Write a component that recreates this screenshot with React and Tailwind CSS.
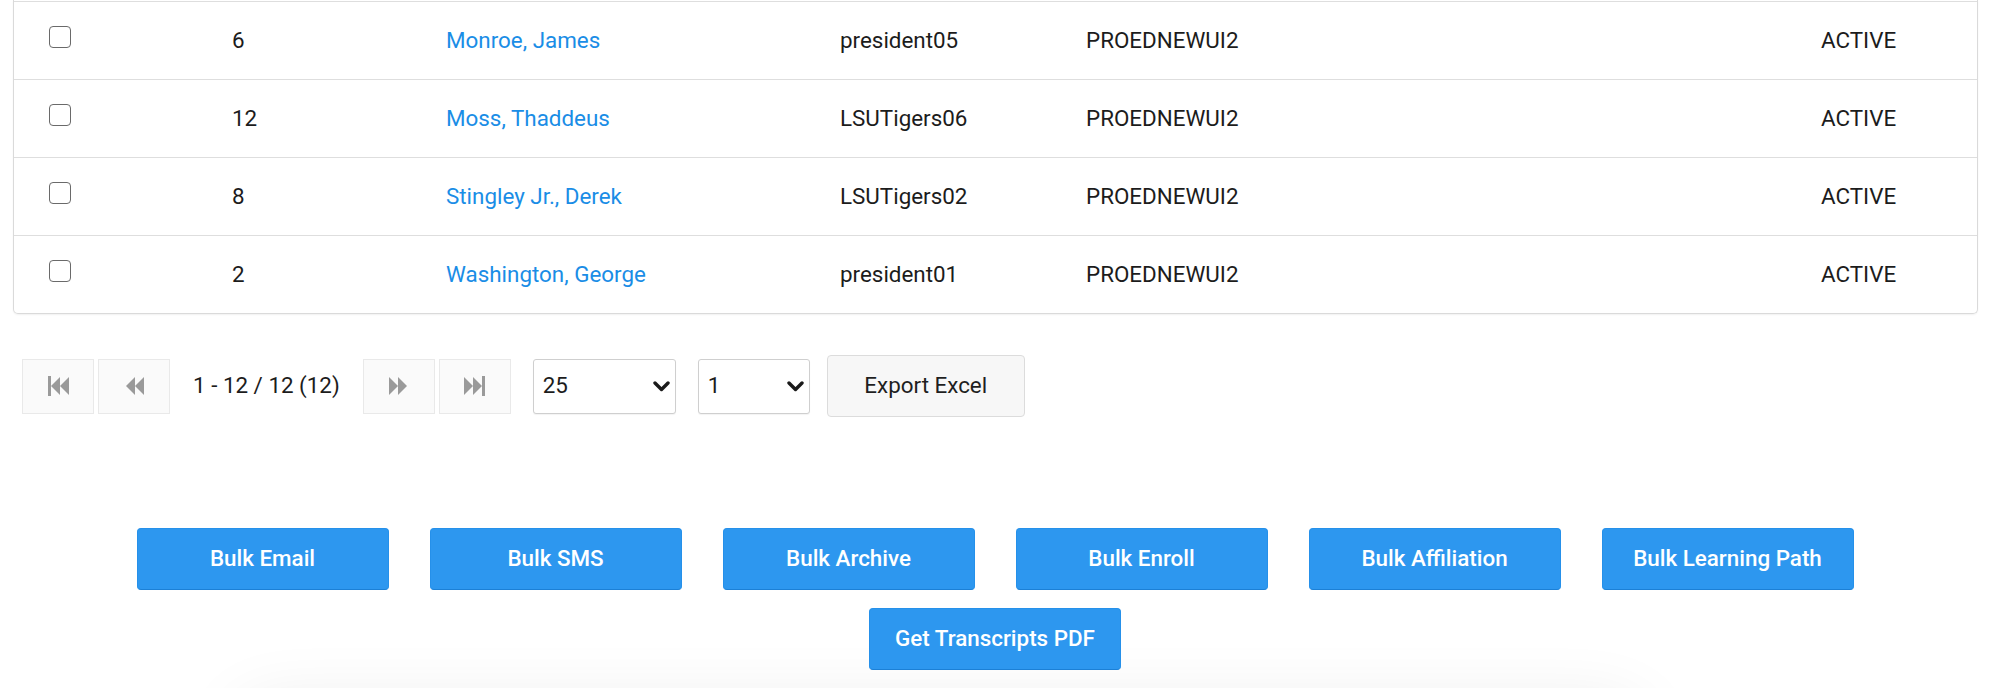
import React from "react";

const rows = [
  { id: 6, name: "Monroe, James", user: "president05", org: "PROEDNEWUI2", status: "ACTIVE" },
  { id: 12, name: "Moss, Thaddeus", user: "LSUTigers06", org: "PROEDNEWUI2", status: "ACTIVE" },
  { id: 8, name: "Stingley Jr., Derek", user: "LSUTigers02", org: "PROEDNEWUI2", status: "ACTIVE" },
  { id: 2, name: "Washington, George", user: "president01", org: "PROEDNEWUI2", status: "ACTIVE" },
];

const bulkActions = [
  "Bulk Email",
  "Bulk SMS",
  "Bulk Archive",
  "Bulk Enroll",
  "Bulk Affiliation",
  "Bulk Learning Path",
  "Get Transcripts PDF",
];

function PagerIcon({ type }) {
  // simple double-triangle glyphs, with a bar for first / last
  return (
    <svg width="21" height="20" viewBox="0 0 21 20" fill="#9a9a9a">
      {type === "first" && (
        <>
          <rect x="0" y="0" width="3" height="20" />
          <polygon points="12,1 3,10 12,19" />
          <polygon points="21,1 12,10 21,19" />
        </>
      )}
      {type === "prev" && (
        <>
          <polygon points="11,1 2,10 11,19" />
          <polygon points="20,1 11,10 20,19" />
        </>
      )}
      {type === "next" && (
        <>
          <polygon points="1,1 10,10 1,19" />
          <polygon points="10,1 19,10 10,19" />
        </>
      )}
      {type === "last" && (
        <>
          <polygon points="0,1 9,10 0,19" />
          <polygon points="9,1 18,10 9,19" />
          <rect x="18" y="0" width="3" height="20" />
        </>
      )}
    </svg>
  );
}

function Chevron() {
  return (
    <svg width="17" height="11" viewBox="0 0 17 11" fill="none">
      <polyline
        points="2,2 8.5,8.5 15,2"
        stroke="#1a1a1a"
        strokeWidth="3.4"
        strokeLinecap="round"
        strokeLinejoin="round"
      />
    </svg>
  );
}

function FakeSelect({ value, width }) {
  return (
    <div
      className={`flex h-[55px] items-center justify-between rounded-[3px] border border-[#cfcfcf] bg-white pl-[9px] pr-[5px] shadow-[0_1px_1px_rgba(0,0,0,0.05)] ${width}`}
    >
      <span>{value}</span>
      <Chevron />
    </div>
  );
}

function PagerButton({ type }) {
  return (
    <button className="flex h-[55px] w-[72px] items-center justify-center border border-[#e9e9e9] bg-[#fafafa]">
      <PagerIcon type={type} />
    </button>
  );
}

export default function App() {
  return (
    <div className="h-[688px] overflow-hidden bg-white font-['Roboto',sans-serif] text-[22.4px] text-[#1c1c1c]">
      <div className="pl-[13px] pr-[12px]">
        <div className="rounded-b-[5px] border-x border-b border-[#dadada] pt-px shadow-[0_1px_2px_rgba(0,0,0,0.06)]">
          {rows.map((r) => (
            <div
              key={r.id}
              className="grid h-[78px] grid-cols-[218px_214px_394px_246px_735px_1fr] items-center border-t border-[#dedede]"
            >
              <div className="pl-[35px]">
                <input
                  type="checkbox"
                  className="mb-[8px] block h-[22px] w-[22px] appearance-none rounded-[4px] border-[1.5px] border-[#6a6a6a] bg-white"
                />
              </div>
              <div>{r.id}</div>
              <div>
                <a className="text-[#1a8de6]" href="#">
                  {r.name}
                </a>
              </div>
              <div>{r.user}</div>
              <div>{r.org}</div>
              <div>{r.status}</div>
            </div>
          ))}
        </div>

        <div className="mt-[41px] flex h-[62px] items-center pl-[9px]">
          <div className="flex gap-[4px]">
            <PagerButton type="first" />
            <PagerButton type="prev" />
          </div>
          <span className="mx-[23px]">1 - 12 / 12 (12)</span>
          <div className="flex gap-[4px]">
            <PagerButton type="next" />
            <PagerButton type="last" />
          </div>
          <div className="ml-[22px]">
            <FakeSelect value="25" width="w-[143px]" />
          </div>
          <div className="ml-[22px]">
            <FakeSelect value="1" width="w-[112px]" />
          </div>
          <button className="ml-[17px] h-[62px] w-[198px] rounded-[4px] border border-[#dcdcdc] bg-[#f7f7f7] text-[#1f1f1f]">
            Export Excel
          </button>
        </div>
      </div>

      <div className="mt-[111px] flex flex-wrap justify-center gap-x-[41px] gap-y-[18px]">
        {bulkActions.map((label) => (
          <button
            key={label}
            className="h-[62px] w-[252px] rounded-[4px] border border-[#2590ea] border-b-[#1c80d6] bg-[#2d97ef] font-medium text-white"
          >
            {label}
          </button>
        ))}
      </div>

      <div className="ml-[240px] mt-[36px] h-[200px] w-[1400px] rounded-[24px] bg-white shadow-[0_0_70px_rgba(0,0,0,0.09)]" />
    </div>
  );
}
